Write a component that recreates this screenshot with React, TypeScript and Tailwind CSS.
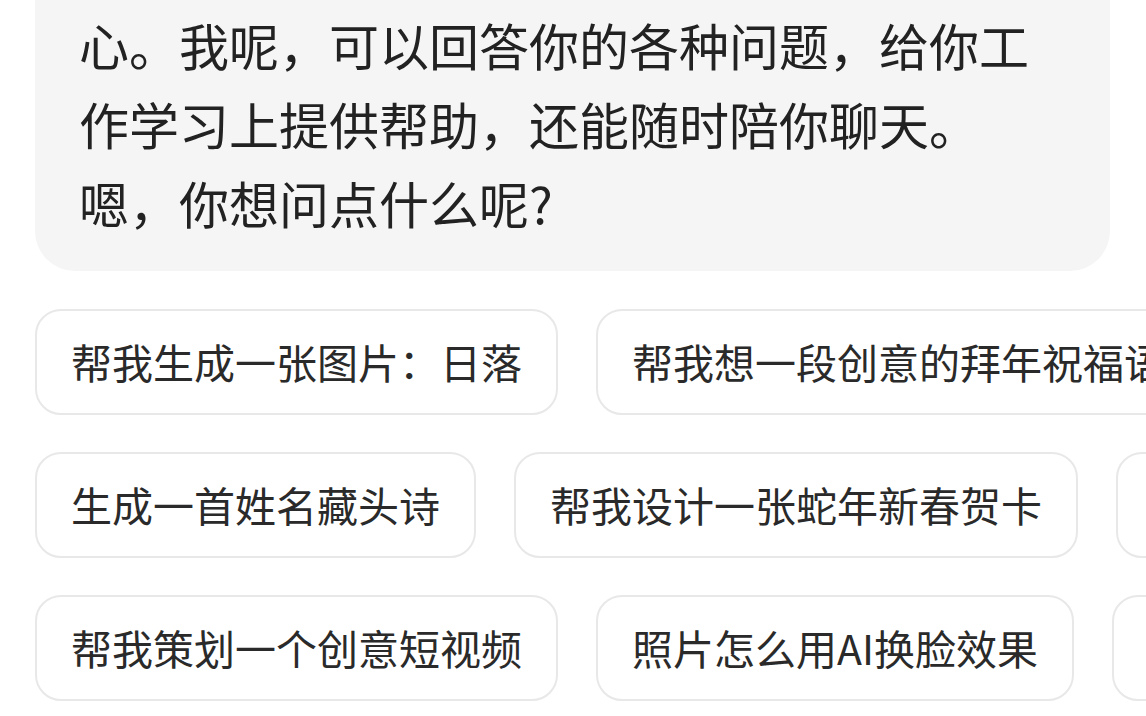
const rows: string[][] = [
  ['帮我生成一张图片：日落', '帮我想一段创意的拜年祝福语'],
  ['生成一首姓名藏头诗', '帮我设计一张蛇年新春贺卡', '写一篇春节旅行攻略'],
  ['帮我策划一个创意短视频', '照片怎么用AI换脸效果', '推荐几部好看的电影'],
]

const lines = [
  '心。我呢，可以回答你的各种问题，给你工',
  '作学习上提供帮助，还能随时陪你聊天。',
  '嗯，你想问点什么呢?',
]

export default function App() {
  return (
    <div
      className="w-[1146px] h-[716px] overflow-hidden bg-white pl-[35px]"
      style={{ fontFamily: '"Noto Sans CJK SC", "Noto Sans", sans-serif' }}
    >
      <div className="mr-[36px] rounded-b-[40px] bg-[#f5f5f5] pl-[44px] pr-[40px] pt-[5px] pb-[29px] text-[50px] leading-[79px] text-[#222]">
        {lines.map((line) => (
          <div key={line} className="whitespace-nowrap">
            {line}
          </div>
        ))}
      </div>

      <div className="mt-[38px] flex flex-col gap-[37px]">
        {rows.map((row, i) => (
          <div key={i} className="flex gap-[38px] overflow-hidden">
            {row.map((chip) => (
              <div
                key={chip}
                className="flex h-[106px] shrink-0 items-center whitespace-nowrap rounded-[26px] border-2 border-[#e8e8e8] bg-white px-[34px] text-[41px] text-[#2a2a2a]"
              >
                {chip}
              </div>
            ))}
          </div>
        ))}
      </div>
    </div>
  )
}
